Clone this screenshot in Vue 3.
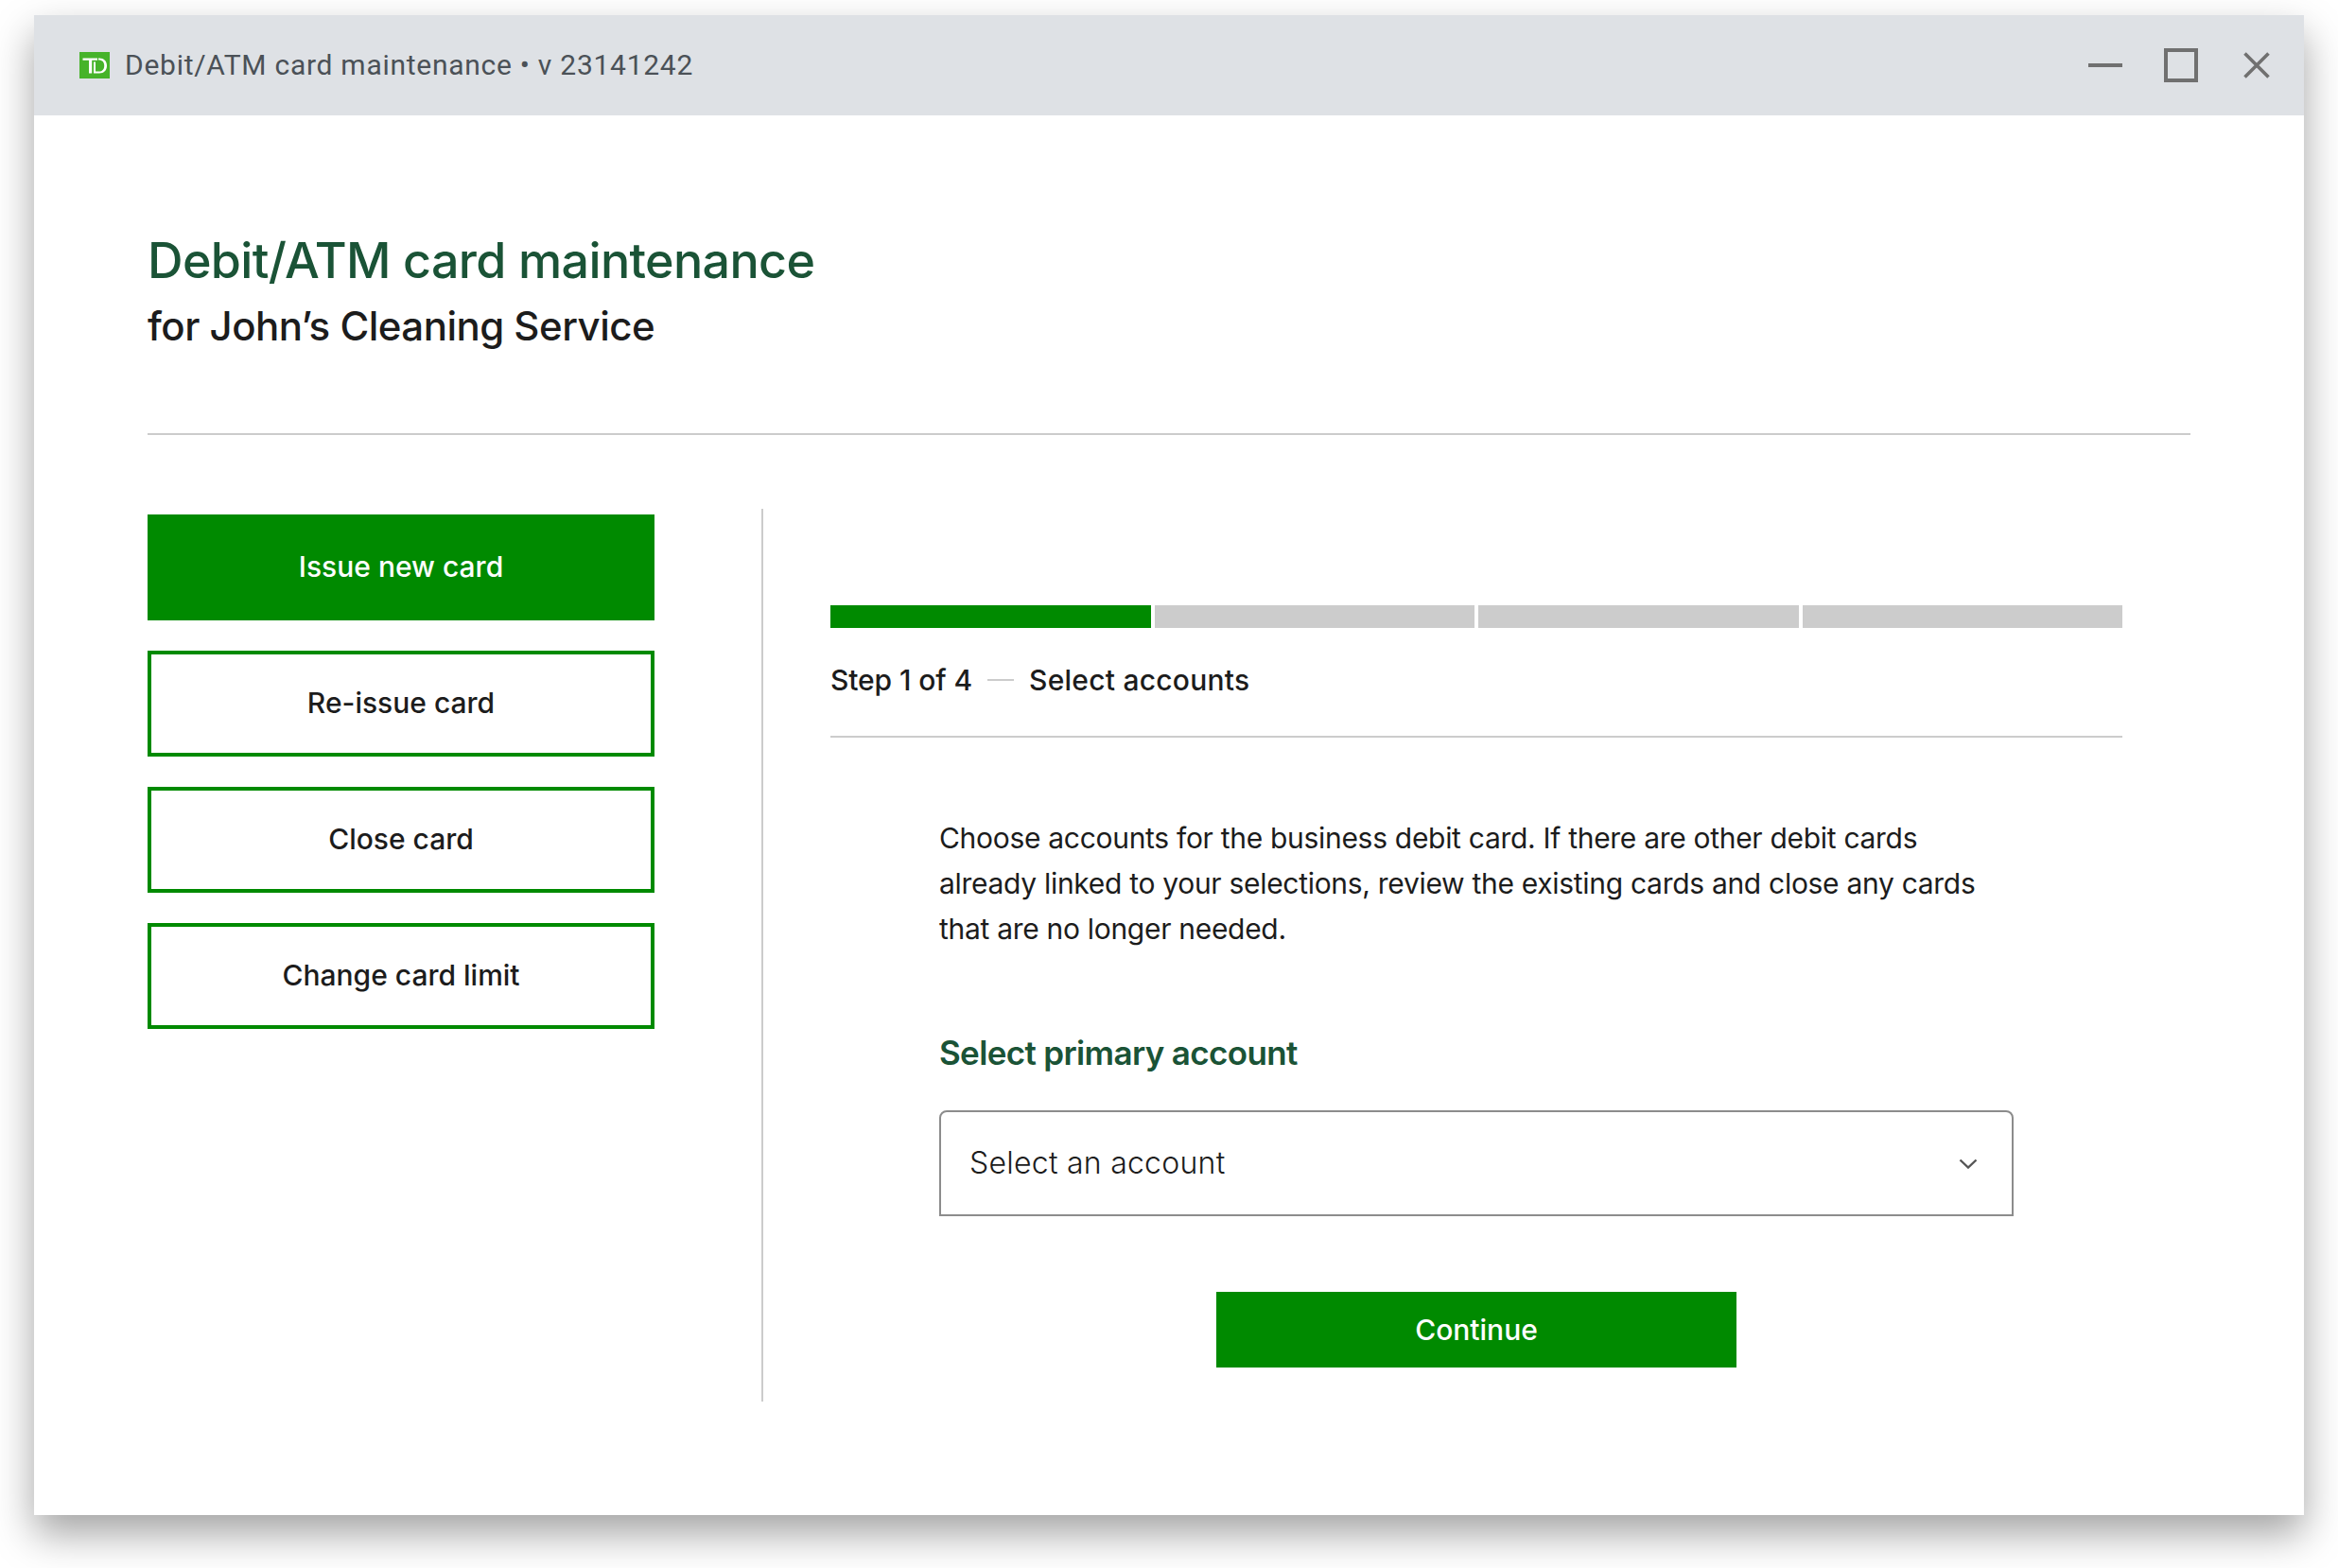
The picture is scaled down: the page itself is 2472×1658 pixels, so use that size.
<template>
  <div class="page">
    <div class="window">
      <header class="titlebar">
        <div class="app-name">
          <svg class="logo" width="32" height="28" viewBox="0 0 32 28">
            <rect width="32" height="28" fill="#46b32a" />
            <path d="M3.5 6.5H19V8.8H13.2V22.5H10V8.8H3.5Z" fill="#fff" />
            <path d="M15 10.5H17V20.6H20.5C24.5 20.6 26.2 18 26.2 14.5 26.2 10.8 24.3 8.6 20.5 8.6H20V6.5H21C26 6.5 29 9.6 29 14.5 29 19.4 26 22.5 21 22.5H15Z" fill="#fff" />
          </svg>
          <span class="app-title">Debit/ATM card maintenance • v 23141242</span>
        </div>
        <div class="controls">
          <span class="minimize"></span>
          <span class="maximize"></span>
          <svg width="28" height="28" viewBox="0 0 28 28">
            <path d="M1.5 1.5L26.5 26.5M26.5 1.5L1.5 26.5" stroke="#707070" stroke-width="3.6" fill="none" />
          </svg>
        </div>
      </header>

      <main class="content">
        <div class="heading">
          <h1>Debit/ATM card maintenance</h1>
          <h2>for John’s Cleaning Service</h2>
        </div>

        <div class="columns">
          <nav class="actions">
            <button
              v-for="(action, i) in actions"
              :key="action"
              class="action"
              :class="{ active: i === 0 }"
            >
              {{ action }}
            </button>
          </nav>

          <section class="panel">
            <div class="progress">
              <span
                v-for="n in 4"
                :key="n"
                class="segment"
                :class="{ done: n === 1 }"
              ></span>
            </div>
            <div class="step">
              <span class="step-count">Step 1 of 4</span>
              <span class="dash"></span>
              <span class="step-name">Select accounts</span>
            </div>

            <div class="form">
              <p class="intro">
                Choose accounts for the business debit card. If there are other debit cards<br />
                already linked to your selections, review the existing cards and close any cards<br />
                that are no longer needed.
              </p>
              <h3>Select primary account</h3>
              <div class="select">
                <span>Select an account</span>
                <svg width="20" height="11" viewBox="0 0 20 11">
                  <path d="M1.5 1.5L10 9.5L18.5 1.5" stroke="#555" stroke-width="2.4" fill="none" />
                </svg>
              </div>
              <button class="continue">Continue</button>
            </div>
          </section>
        </div>
      </main>
    </div>
  </div>
</template>

<script setup>
const actions = ['Issue new card', 'Re-issue card', 'Close card', 'Change card limit']
</script>

<style>
html,
body {
  background: #fff;
}
</style>

<style scoped>
.page {
  width: 2472px;
  height: 1658px;
  box-sizing: border-box;
  padding: 16px 36px;
  font-family: Inter, "Liberation Sans", sans-serif;
  color: #1c1c1c;
  overflow: hidden;
}

.window {
  height: 1586px;
  background: #fff;
  box-shadow: 0 20px 40px rgba(0, 0, 0, 0.36);
  display: flex;
  flex-direction: column;
}

.titlebar {
  height: 106px;
  flex-shrink: 0;
  background: #dee1e5;
  display: flex;
  align-items: center;
  justify-content: space-between;
  padding: 0 36px 0 48px;
}

.app-name {
  display: flex;
  align-items: center;
  gap: 16px;
  font-family: Roboto, sans-serif;
  font-size: 30px;
  letter-spacing: 0.73px;
  color: #4b5157;
}

.app-title {
  margin-bottom: 2px;
}

.logo {
  flex-shrink: 0;
}

.controls {
  display: flex;
  align-items: center;
}

.minimize {
  width: 36px;
  height: 4px;
  background: #707070;
  margin-right: 44px;
}

.maximize {
  width: 36px;
  height: 36px;
  box-sizing: border-box;
  border: 4px solid #707070;
  margin-right: 48px;
}

.controls svg {
  display: block;
}

.content {
  flex: 1;
  padding: 0 120px;
  display: flex;
  flex-direction: column;
}

.heading {
  height: 338px;
  box-sizing: border-box;
  padding-top: 122px;
  border-bottom: 2px solid #ccc;
}

h1 {
  margin: 0;
  font-size: 52px;
  line-height: 64px;
  font-weight: 500;
  letter-spacing: -0.65px;
  color: #1a5336;
}

h2 {
  margin: 9px 0 0;
  font-size: 42px;
  line-height: 56px;
  font-weight: 500;
  letter-spacing: -0.52px;
  color: #1c1c1c;
}

.columns {
  display: flex;
  margin-top: 78px;
}

.actions {
  width: 536px;
  padding-top: 6px;
  display: flex;
  flex-direction: column;
  gap: 32px;
}

.action {
  height: 112px;
  box-sizing: border-box;
  border: 4px solid #008a00;
  background: #fff;
  color: #1c1c1c;
  font-family: inherit;
  font-size: 30px;
  font-weight: 500;
  padding: 0 0 2px;
}

.action.active {
  background: #008a00;
  color: #fff;
}

.panel {
  width: 1510px;
  height: 944px;
  box-sizing: border-box;
  margin-left: 113px;
  border-left: 2px solid #ccc;
  padding: 102px 71px 0 71px;
}

.progress {
  display: flex;
  gap: 4px;
}

.segment {
  flex: 1;
  height: 24px;
  background: #ccc;
}

.segment.done {
  background: #008a00;
}

.step {
  display: flex;
  align-items: center;
  height: 116px;
  box-sizing: border-box;
  padding-bottom: 4px;
  border-bottom: 2px solid #ccc;
  font-size: 30px;
  font-weight: 500;
  letter-spacing: -0.1px;
}

.step-name {
  letter-spacing: 0.25px;
}

.dash {
  width: 28px;
  height: 2px;
  background: #ccc;
  margin: 0 16px;
}

.form {
  width: 1136px;
  margin-left: 115px;
}

.intro {
  margin: 82px 0 0;
  font-size: 30px;
  line-height: 48px;
  font-weight: 400;
  letter-spacing: -0.3px;
}

h3 {
  margin: 83px 0 0;
  font-size: 35px;
  line-height: 48px;
  font-weight: 600;
  letter-spacing: -0.65px;
  color: #1a5336;
}

.select {
  height: 112px;
  box-sizing: border-box;
  margin-top: 37px;
  border: 2px solid #8c8c8c;
  border-radius: 8px 8px 0 0;
  display: flex;
  align-items: center;
  justify-content: space-between;
  padding: 0 36px 2px 30px;
  font-size: 32px;
  font-weight: 300;
  letter-spacing: 0.25px;
}

.select svg {
  margin-top: 2px;
}

.continue {
  display: block;
  width: 550px;
  height: 80px;
  margin: 80px auto 0;
  border: 0;
  background: #008a00;
  color: #fff;
  font-family: inherit;
  font-size: 30px;
  font-weight: 500;
}
</style>
